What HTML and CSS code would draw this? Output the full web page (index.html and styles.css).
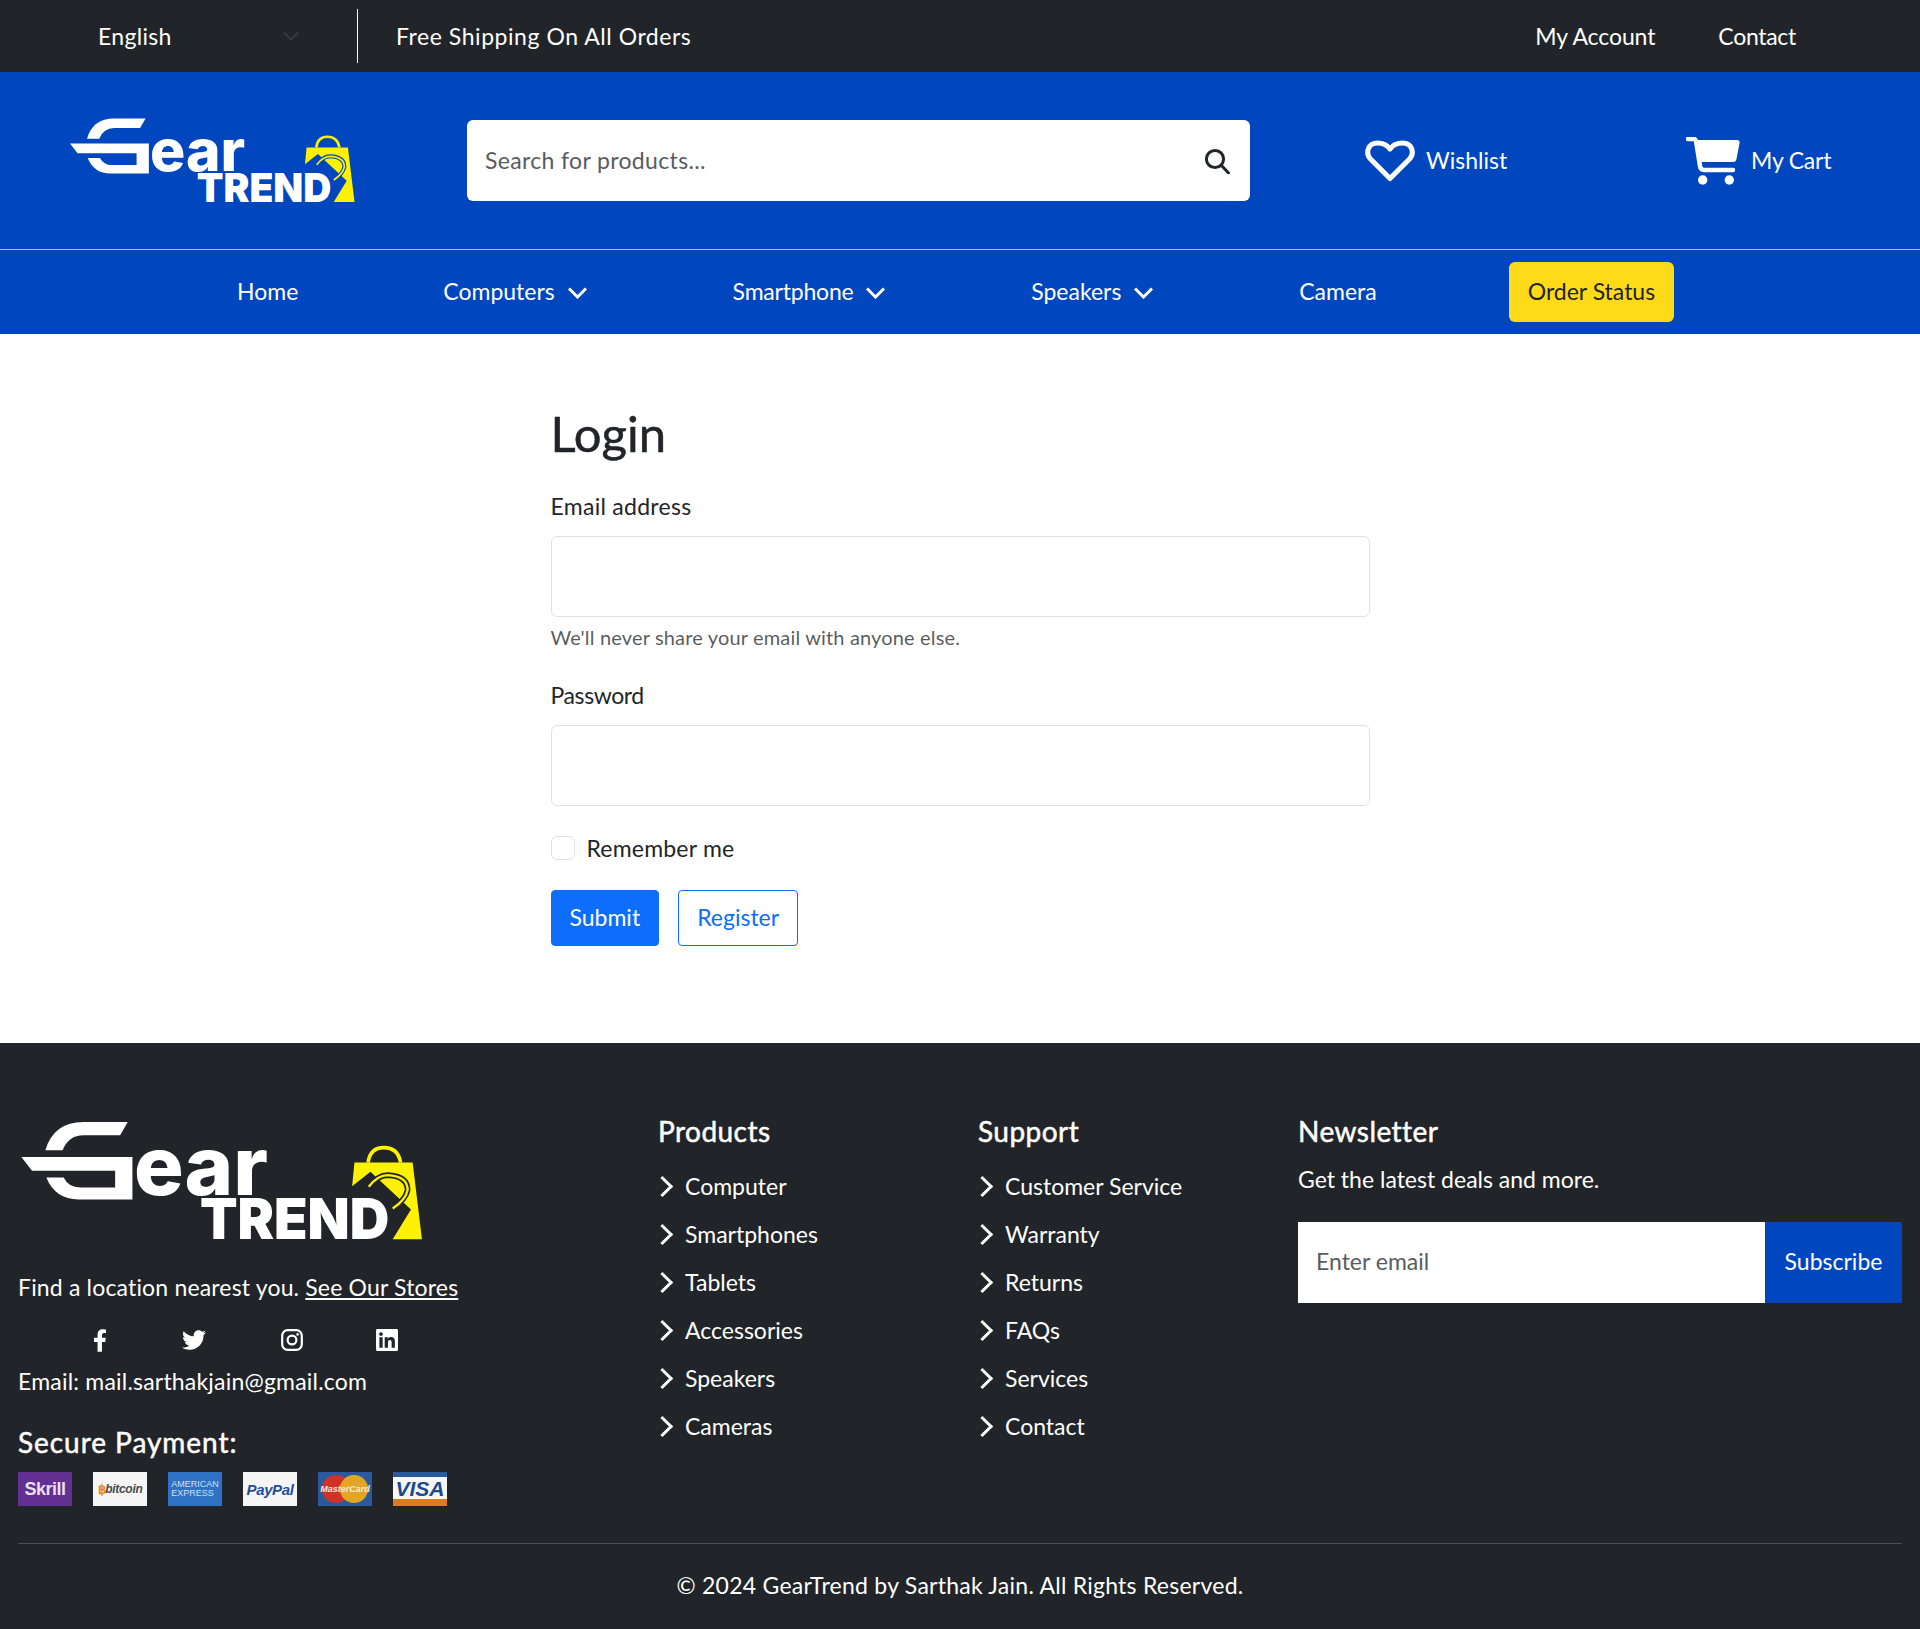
FILE: index.html
```html
<!DOCTYPE html>
<html lang="en">
<head>
<meta charset="utf-8">
<title>GearTrend - Login</title>
<link rel="stylesheet" href="styles.css">
</head>
<body>

<div class="topbar">
	<div class="lang">
		<span>English</span>
		<svg class="lang-arrow" width="16" height="10" viewBox="0 0 16 10"><path d="M1 1.5l7 7 7-7" fill="none" stroke="#343a40" stroke-width="2"/></svg>
	</div>
	<div class="shipping">Free Shipping On All Orders</div>
	<div class="toplinks">
		<a href="#" class="link-account">My Account</a>
		<a href="#" class="link-contact">Contact</a>
	</div>
</div>

<header class="header">
	<a href="#" class="logo logo-head">
		<svg viewBox="63 65 1207 355" width="285" height="85">
			<path class="logo-white" d="M383 65L360 105H250Q205 105 187 150H135Q160 65 250 65Z"/>
			<path class="logo-white" d="M63 170H397V298H235Q165 298 138 232H190Q205 262 240 262H345V212H95Z"/>
			<text class="logo-ear" x="402" y="285" textLength="403" lengthAdjust="spacingAndGlyphs">ear</text>
			<text class="logo-trend" x="600" y="418" textLength="570" lengthAdjust="spacingAndGlyphs">TREND</text>
			<path class="logo-handle" d="M1106 187Q1112 142 1153 142Q1196 142 1204 187"/>
			<path class="logo-bag" d="M1065 187H1240L1268 418H1180L1235 328L1113 215L1058 258Z"/>
			<path class="logo-cut" d="M1108 260Q1135 225 1165 225Q1225 228 1225 270Q1218 300 1180 325"/>
			<path class="logo-loop" d="M1108 260Q1135 225 1165 225Q1225 228 1225 270Q1218 300 1180 325"/>
		</svg>
	</a>
	<div class="search">
		<span class="search-text">Search for products...</span>
		<svg width="26" height="26" viewBox="0 0 26 26"><circle cx="11" cy="11" r="8.6" fill="none" stroke="#212529" stroke-width="3"/><path d="M17.5 17.5l7 7.5" stroke="#212529" stroke-width="3" stroke-linecap="round"/></svg>
	</div>
	<a href="#" class="head-link wish">
		<svg width="50" height="42" viewBox="0 0 50 42"><path d="M25 38.5L5.5 19C0 13 3 3 12.5 3C18 3 22.5 5.5 25 9C27.5 5.5 32 3 37.5 3C47 3 50 13 44.5 19Z" fill="none" stroke="#fff" stroke-width="5" stroke-linejoin="round"/></svg>
		<span>Wishlist</span>
	</a>
	<a href="#" class="head-link cart">
		<svg width="54" height="48" viewBox="0 0 54 48">
			<path d="M10 3H51Q54 3 53.6 6L50.5 22Q50 25 47 25H14Z" fill="#fff"/>
			<path d="M2 2H7.5Q9.5 2 10 4L14 29Q14.5 33 18 33H47" fill="none" stroke="#fff" stroke-width="4.5" stroke-linecap="round" stroke-linejoin="round"/>
			<circle cx="16.7" cy="43" r="4.7" fill="#fff"/>
			<circle cx="43.3" cy="43" r="4.7" fill="#fff"/>
		</svg>
		<span>My Cart</span>
	</a>
</header>

<nav class="nav">
	<a href="#" class="nav-home">Home</a>
	<a href="#">Computers <svg class="nav-arrow" width="19" height="12" viewBox="0 0 19 12"><path d="M1 1.5l8.5 8.5L18 1.5" fill="none" stroke="#fff" stroke-width="3"/></svg></a>
	<a href="#" class="nav-smart">Smartphone <svg class="nav-arrow" width="19" height="12" viewBox="0 0 19 12"><path d="M1 1.5l8.5 8.5L18 1.5" fill="none" stroke="#fff" stroke-width="3"/></svg></a>
	<a href="#">Speakers <svg class="nav-arrow" width="19" height="12" viewBox="0 0 19 12"><path d="M1 1.5l8.5 8.5L18 1.5" fill="none" stroke="#fff" stroke-width="3"/></svg></a>
	<a href="#">Camera</a>
	<a href="#" class="order-btn">Order Status</a>
</nav>

<main class="main">
	<h2 class="title">Login</h2>
	<label class="label label-email">Email address</label>
	<div class="input"></div>
	<div class="help">We'll never share your email with anyone else.</div>
	<label class="label label-pass">Password</label>
	<div class="input"></div>
	<div class="check-row">
		<span class="check"></span>
		<label>Remember me</label>
	</div>
	<div class="buttons">
		<a href="#" class="btn btn-primary">Submit</a>
		<a href="#" class="btn btn-outline">Register</a>
	</div>
</main>

<footer class="footer">
	<div class="footer-cols">
		<div class="col-about">
			<svg class="logo-foot" viewBox="63 65 1207 355" width="402" height="118">
				<path class="logo-white" d="M383 65L360 105H250Q205 105 187 150H135Q160 65 250 65Z"/>
				<path class="logo-white" d="M63 170H397V298H235Q165 298 138 232H190Q205 262 240 262H345V212H95Z"/>
				<text class="logo-ear" x="402" y="285" textLength="403" lengthAdjust="spacingAndGlyphs">ear</text>
				<text class="logo-trend" x="600" y="418" textLength="570" lengthAdjust="spacingAndGlyphs">TREND</text>
				<path class="logo-handle" d="M1106 187Q1112 142 1153 142Q1196 142 1204 187"/>
				<path class="logo-bag" d="M1065 187H1240L1268 418H1180L1235 328L1113 215L1058 258Z"/>
				<path class="logo-cut" d="M1108 260Q1135 225 1165 225Q1225 228 1225 270Q1218 300 1180 325"/>
				<path class="logo-loop" d="M1108 260Q1135 225 1165 225Q1225 228 1225 270Q1218 300 1180 325"/>
			</svg>
			<p class="find">Find a location nearest you. <a href="#">See Our Stores</a></p>
			<div class="social">
				<a href="#"><svg width="14" height="23" viewBox="0 0 320 512"><path fill="#fff" d="M279.14 288l14.22-92.66h-88.91v-60.13c0-25.35 12.42-50.06 52.24-50.06h40.42V6.26S260.43 0 225.36 0c-73.22 0-121.08 44.38-121.08 124.72v70.62H22.89V288h81.39v224h100.17V288z"/></svg></a>
				<a href="#"><svg width="24" height="24" viewBox="0 0 512 512"><path fill="#fff" d="M459.37 151.716c.325 4.548.325 9.097.325 13.645 0 138.72-105.583 298.558-298.558 298.558-59.452 0-114.68-17.219-161.137-47.106 8.447.974 16.568 1.299 25.34 1.299 49.055 0 94.213-16.568 130.274-44.832-46.132-.975-84.792-31.188-98.112-72.772 6.498.974 12.995 1.624 19.818 1.624 9.421 0 18.843-1.3 27.614-3.573-48.081-9.747-84.143-51.98-84.143-102.985v-1.299c13.969 7.797 30.214 12.67 47.431 13.319-28.264-18.843-46.781-51.005-46.781-87.391 0-19.492 5.197-37.36 14.294-52.954 51.655 63.675 129.3 105.258 216.365 109.807-1.624-7.797-2.599-15.918-2.599-24.04 0-57.828 46.782-104.934 104.934-104.934 30.213 0 57.502 12.67 76.67 33.137 23.715-4.548 46.456-13.32 66.599-25.34-7.798 24.366-24.366 44.833-46.132 57.827 21.117-2.273 41.584-8.122 60.426-16.243-14.292 20.791-32.161 39.308-52.628 54.253z"/></svg></a>
				<a href="#"><svg width="22" height="22" viewBox="0 0 22 22"><rect x="1.2" y="1.2" width="19.6" height="19.6" rx="5.5" fill="none" stroke="#fff" stroke-width="2.2"/><circle cx="11" cy="11" r="4.4" fill="none" stroke="#fff" stroke-width="2.2"/><circle cx="16.6" cy="5.4" r="1.3" fill="#fff"/></svg></a>
				<a href="#"><svg width="22" height="22" viewBox="0 32 448 448"><path fill="#fff" d="M416 32H31.9C14.3 32 0 46.5 0 64.3v383.4C0 465.5 14.3 480 31.9 480H416c17.6 0 32-14.5 32-32.3V64.3c0-17.8-14.4-32.3-32-32.3zM135.4 416H69V202.2h66.5V416zm-33.2-243c-21.3 0-38.5-17.3-38.5-38.5S80.9 96 102.2 96c21.2 0 38.5 17.3 38.5 38.5 0 21.3-17.2 38.5-38.5 38.5zm282.1 243h-66.4V312c0-24.8-.5-56.7-34.5-56.7-34.6 0-39.9 27-39.9 54.9V416h-66.4V202.2h63.7v29.2h.9c8.9-16.8 30.6-34.5 62.9-34.5 67.2 0 79.7 44.3 79.7 101.9V416z"/></svg></a>
			</div>
			<p class="mail">Email: mail.sarthakjain@gmail.com</p>
			<h5 class="secure">Secure Payment:</h5>
			<div class="cards">
				<span class="card card-skrill">Skrill</span>
				<span class="card card-bitcoin"><b>&#3647;</b>bitcoin</span>
				<span class="card card-amex">AMERICAN<br>EXPRESS</span>
				<span class="card card-paypal">PayPal</span>
				<span class="card card-master"><i class="dot-red"></i><i class="dot-gold"></i><em>MasterCard</em></span>
				<span class="card card-visa">VISA</span>
			</div>
		</div>
		<div class="col-links">
			<h5>Products</h5>
			<ul>
				<li>Computer</li>
				<li>Smartphones</li>
				<li>Tablets</li>
				<li>Accessories</li>
				<li>Speakers</li>
				<li>Cameras</li>
			</ul>
		</div>
		<div class="col-links">
			<h5>Support</h5>
			<ul>
				<li>Customer Service</li>
				<li>Warranty</li>
				<li>Returns</li>
				<li>FAQs</li>
				<li>Services</li>
				<li>Contact</li>
			</ul>
		</div>
		<div class="col-news">
			<h5>Newsletter</h5>
			<p>Get the latest deals and more.</p>
			<div class="subscribe">
				<span class="sub-input">Enter email</span>
				<a href="#" class="sub-btn">Subscribe</a>
			</div>
		</div>
	</div>
	<div class="copyright">&copy; 2024 GearTrend by Sarthak Jain. All Rights Reserved.</div>
</footer>

</body>
</html>
```
FILE: styles.css
```css
* {
	box-sizing: border-box;
}
html {
	overflow: hidden;
}
body {
	margin: 0;
	font-family: "Lato", "Open Sans", sans-serif;
	font-size: 23px;
	line-height: 36px;
	color: #212529;
	background-color: #fff;
}
a {
	color: inherit;
	text-decoration: none;
}
h2, h5, p, ul {
	margin: 0;
	padding: 0;
}

/* top bar */
.topbar {
	display: flex;
	align-items: center;
	height: 72px;
	background-color: #212529;
	color: #fff;
	padding-left: 98px;
	padding-right: 124px;
}
.lang {
	display: flex;
	align-items: center;
	justify-content: space-between;
	width: 260px;
	height: 54px;
	padding-right: 58px;
	border-right: 1px solid #fff;
	letter-spacing: .3px;
}
.lang span, .shipping, .toplinks a {
	padding-bottom: 1px;
}
.shipping {
	margin-left: 38px;
	letter-spacing: .55px;
}
.toplinks {
	display: flex;
	gap: 63px;
	margin-left: auto;
}
.link-account {
	letter-spacing: -.1px;
}
.link-contact {
	letter-spacing: -.3px;
}

/* header */
.header {
	display: flex;
	align-items: center;
	height: 178px;
	background-color: #0047bf;
	border-bottom: 1px solid #a9c0e8;
	color: #fff;
	padding-left: 70px;
	--cut: #0047bf;
}
.logo {
	display: block;
	height: 85px;
}
.logo-white {
	fill: #fff;
}
.logo-ear {
	fill: #fff;
	font-family: "Inter", sans-serif;
	font-weight: 800;
	font-size: 243px;
}
.logo-trend {
	fill: #fff;
	font-family: "Inter", sans-serif;
	font-weight: 900;
	font-size: 169px;
}
.logo-handle {
	fill: none;
	stroke: #fff200;
	stroke-width: 11;
}
.logo-bag {
	fill: #fff200;
}
.logo-cut {
	fill: none;
	stroke: var(--cut);
	stroke-width: 17;
}
.logo-loop {
	fill: none;
	stroke: #fff200;
	stroke-width: 7;
}
.search {
	display: flex;
	align-items: center;
	justify-content: space-between;
	width: 783px;
	height: 81px;
	margin-left: 112px;
	padding: 0 20px 0 18px;
	background-color: #fff;
	border-radius: 6px;
}
.search-text {
	color: #595c5f;
	padding-bottom: 2px;
	letter-spacing: .35px;
}
.head-link {
	display: flex;
	align-items: center;
	gap: 11px;
}
.head-link span {
	padding-bottom: 2px;
}
.wish {
	margin-left: 115px;
	width: 321px;
}
.cart span {
	letter-spacing: -.2px;
}

/* nav */
.nav {
	display: flex;
	align-items: center;
	gap: 146px;
	height: 84px;
	padding-left: 237px;
	background-color: #0047bf;
	color: #fff;
}
.nav a {
	padding-bottom: 2px;
}
.nav-home {
	margin-right: -1px;
}
.nav-smart {
	letter-spacing: -.2px;
}
.nav-arrow {
	margin-left: 7px;
	vertical-align: 1px;
}
.nav .order-btn {
	height: 60px;
	line-height: 58px;
	padding: 0 19px 2px;
	margin-left: -14px;
	background-color: #ffda19;
	color: #212529;
	border-radius: 6px;
}

/* login form */
.main {
	width: 819px;
	height: 709px;
	margin: 0 auto;
	padding-top: 70px;
}
.title {
	font-size: 49px;
	font-weight: 400;
	-webkit-text-stroke: .5px #212529;
	line-height: 58px;
	margin-bottom: 26px;
}
.label {
	display: block;
	height: 36px;
	margin-bottom: 12px;
}
.label-email {
	letter-spacing: .28px;
}
.label-pass {
	margin-top: 25px;
	letter-spacing: -.4px;
}
.input {
	height: 81px;
	background-color: #fff;
	border: 1px solid #dee2e6;
	border-radius: 6px;
}
.help {
	font-size: 20px;
	line-height: 30px;
	margin-top: 5px;
	letter-spacing: .16px;
	color: rgba(33, 37, 41, .75);
}
.check-row {
	display: flex;
	align-items: center;
	gap: 12px;
	margin-top: 24px;
	letter-spacing: .2px;
}
.check {
	width: 24px;
	height: 24px;
	border: 1px solid #dee2e6;
	border-radius: 6px;
}
.buttons {
	display: flex;
	gap: 19px;
	margin-top: 24px;
}
.btn {
	height: 56px;
	line-height: 52px;
	padding: 0 18px;
	border: 1px solid #0d6efd;
	border-radius: 4px;
}
.btn-primary {
	background-color: #0d6efd;
	color: #fff;
}
.btn-outline {
	color: #0d6efd;
}

/* footer */
.footer {
	height: 586px;
	padding: 72px 18px 0;
	background-color: #212529;
	color: #fff;
}
.footer-cols {
	display: grid;
	grid-template-columns: 640px 320px 320px 1fr;
	height: 429px;
	border-bottom: 1px solid #4d5154;
}
.footer h5 {
	font-size: 28px;
	font-weight: 400;
	-webkit-text-stroke: .5px #fff;
	line-height: 36px;
	letter-spacing: .45px;
}
.col-links h5, .col-news h5 {
	margin-top: -2px;
}
.logo-foot {
	display: block;
	margin: 7px 0 0 3px;
	--cut: #212529;
}
.find {
	margin-top: 29px;
	letter-spacing: .17px;
}
.find a {
	text-decoration: underline;
}
.social {
	display: flex;
	align-items: center;
	height: 26px;
	margin-top: 22px;
	padding-left: 69px;
}
.social a {
	display: flex;
	justify-content: center;
	width: 95px;
	margin-left: -0.5px;
}
.social a:first-child {
	width: 26px;
	margin-right: 34px;
}
.social a:nth-child(3) {
	margin-left: 3px;
}
.social a:nth-child(4) {
	margin-left: 0;
}
.mail {
	margin-top: 10px;
	letter-spacing: .2px;
}
.footer .secure {
	margin-top: 25px;
	letter-spacing: .95px;
}
.cards {
	display: flex;
	gap: 21px;
	margin-top: 12px;
}
.card {
	position: relative;
	display: flex;
	align-items: center;
	justify-content: center;
	width: 54px;
	height: 34px;
	overflow: hidden;
	font-family: "Liberation Sans", sans-serif;
	font-size: 13px;
	line-height: 1;
	font-weight: bold;
}
.card-skrill {
	background-color: #622f92;
	color: #eadff2;
	font-size: 18px;
	letter-spacing: -.5px;
}
.card-bitcoin {
	background-color: #f5f5f5;
	color: #4a4a4a;
	font-size: 12px;
	font-style: italic;
	letter-spacing: -.3px;
}
.card-bitcoin b {
	color: #e98a20;
	font-style: normal;
	font-size: 13px;
}
.card-amex {
	flex-direction: column;
	background-color: #2f72c4;
	color: #cfe0f4;
	font-size: 9px;
	font-weight: normal;
}
.card-paypal {
	background-color: #f5f5f5;
	color: #1f4f9c;
	font-style: italic;
	font-size: 15px;
	letter-spacing: -.4px;
}
.card-master {
	background-color: #2a5a9e;
}
.dot-red, .dot-gold {
	position: absolute;
	top: 3px;
	width: 28px;
	height: 28px;
	border-radius: 50%;
}
.dot-red {
	left: 4px;
	background-color: #cf3327;
}
.dot-gold {
	right: 4px;
	background-color: #e9ac1f;
	opacity: .95;
}
.card-master em {
	position: relative;
	font-size: 9px;
	color: #f7e9d8;
}
.card-visa {
	background: linear-gradient(#2a5a9e 0 5px, #f7f7f7 5px 27px, #dc7c1e 27px);
	color: #1b4a8c;
	font-size: 21px;
	font-style: italic;
	font-weight: bold;
	padding-bottom: 1px;
}
.col-links h5 {
	margin-bottom: 13px;
}
.col-links ul {
	list-style: none;
}
.col-links li {
	display: flex;
	align-items: center;
	height: 48px;
	padding-left: 27px;
	padding-bottom: 1px;
	position: relative;
}
.col-links li::before {
	content: "";
	position: absolute;
	left: -3px;
	top: 17px;
	width: 12px;
	height: 12px;
	border-top: 3px solid #fff;
	border-right: 3px solid #fff;
	transform: rotate(45deg);
}
.col-news p {
	margin-top: 12px;
}
.subscribe {
	display: flex;
	height: 81px;
	margin-top: 25px;
}
.sub-input {
	flex: 1;
	padding: 0 18px;
	line-height: 79px;
	background-color: #fff;
	color: #595c5f;
}
.sub-btn {
	width: 137px;
	line-height: 79px;
	text-align: center;
	background-color: #0047bf;
}
.copyright {
	margin-top: 23px;
	text-align: center;
	letter-spacing: .25px;
}
```
